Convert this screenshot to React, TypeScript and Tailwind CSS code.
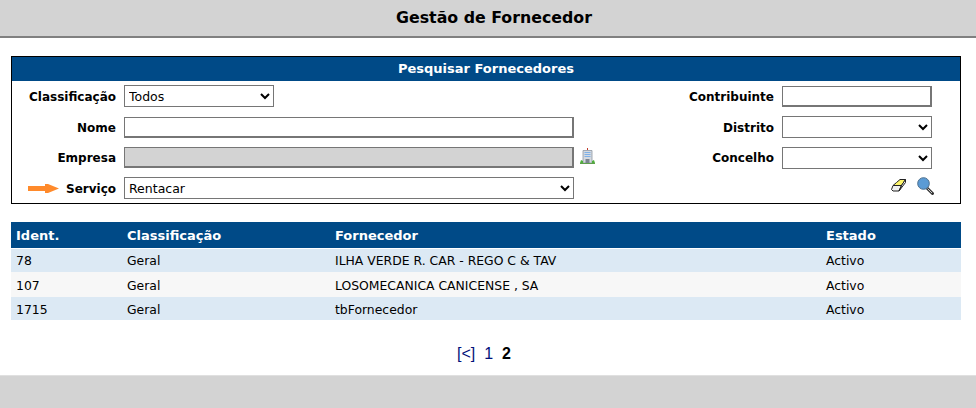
const fieldClass = "h-[22px] w-full border border-[#767676] bg-white text-[12.5px] text-black";
const inputBase = "h-[21px] w-full border border-[#767676] border-r-2 border-b-2 px-1 text-[13px]";
const labelClass = "pt-[1px] text-right font-bold";

const ArrowMark = () => (
  <svg width="31" height="11" viewBox="0 0 31 11">
    <path d="M0 3h17V1h3l11 4.500L20 10h-3V8H0z" fill="#ff8a2b" />
  </svg>
);

const BuildingIcon = () => (
  <svg width="15" height="16" viewBox="0 0 15 16">
    <path d="M7 0h1v2H7z" fill="#c0392b" />
    <path d="M3 2.500h9V15H3z" fill="#d5d9df" stroke="#8d97a3" strokeWidth="0.8" />
    <path d="M4.500 4h6v1h-6zM4.500 6h6v1h-6zM4.500 8h6v1h-6z" fill="#7db0e8" />
    <path d="M5.500 11h4v4h-4z" fill="#7b8490" />
    <path d="M0 15l1-3 2 1v2zM15 15l-1-3-2 1v2z" fill="#4fae3c" />
    <path d="M0 15h15v1H0z" fill="#5e9e4c" />
  </svg>
);

const EraserIcon = () => (
  <svg width="15" height="13" viewBox="0 0 15 13">
    <path d="M5.500 3.500L9 .5h5.500l-4 6H2z" fill="#fdf56a" stroke="#222" strokeWidth="1" strokeLinejoin="round" />
    <path d="M2 6.500h8.500l-2.500 5.500H2L.5 10.500zM10.500 6.500l4-6v3L8 12z" fill="#f0f0f0" stroke="#222" strokeWidth="1" strokeLinejoin="round" />
  </svg>
);

const SearchIcon = () => (
  <svg width="17" height="18" viewBox="0 0 17 18">
    <path d="M10 11l5.500 5.500" stroke="#333" strokeWidth="3" strokeLinecap="round" />
    <path d="M10.500 11.500l4.500 4.500" stroke="#ccc" strokeWidth="1" />
    <circle cx="6.500" cy="6.500" r="5.800" fill="#5b9bd5" stroke="#4a6d8c" strokeWidth="1" />
  </svg>
);

const rows = [
  { id: 78, cls: "Geral", name: "ILHA VERDE R. CAR - REGO C & TAV", state: "Activo", bg: "bg-[#dce9f4]", h: "h-[24px]" },
  { id: 107, cls: "Geral", name: "LOSOMECANICA CANICENSE , SA", state: "Activo", bg: "bg-[#f7f7f7]", h: "h-[25px]" },
  { id: 1715, cls: "Geral", name: "tbFornecedor", state: "Activo", bg: "bg-[#dce9f4]", h: "h-[23px]" },
];

export default function App() {
  return (
    <div className="flex h-[408px] w-[976px] flex-col overflow-hidden bg-white font-['DejaVu_Sans',sans-serif] text-[13px] text-black">
      <div className="flex h-[38px] shrink-0 items-center justify-center border-b-2 border-[#808080] bg-[#d3d3d3] pl-[12px] text-[15.8px] font-bold">
        Gestão de Fornecedor
      </div>

      <div className="mt-[18px] ml-[11px] h-[148px] w-[950px] border border-black">
        <div className="flex h-[24px] items-center justify-center bg-[#004a87] font-bold text-white">
          Pesquisar Fornecedores
        </div>
        <div className="grid grid-cols-[104px_450px_1fr_150px] grid-rows-[22px_22px_21px_22px] items-center gap-x-[8px] gap-y-[9px] pt-[4px] pr-[28px] text-[12px]">
          <label className={labelClass}>Classificação</label>
          <div className="w-[150px]">
            <select className={fieldClass} defaultValue="Todos">
              <option>Todos</option>
            </select>
          </div>
          <label className={labelClass}>Contribuinte</label>
          <input className={`${inputBase} bg-white`} />

          <label className={labelClass}>Nome</label>
          <input className={`${inputBase} bg-white`} />
          <label className={labelClass}>Distrito</label>
          <select className={fieldClass} />

          <label className={labelClass}>Empresa</label>
          <div className="relative">
            <input className={`${inputBase} bg-[#d3d3d3]`} disabled />
            <span className="absolute top-[1px] left-[456px]">
              <BuildingIcon />
            </span>
          </div>
          <label className={labelClass}>Concelho</label>
          <select className={`${fieldClass} self-start`} />

          <div className="relative flex items-center justify-end pt-[1px] font-bold">
            <span className="absolute left-[16px] flex">
              <ArrowMark />
            </span>
            Serviço
          </div>
          <select className={fieldClass} defaultValue="Rentacar">
            <option>Rentacar</option>
          </select>
          <div />
          <div className="mr-[-2px] mb-[5px] flex items-center justify-end gap-[11px]">
            <EraserIcon />
            <SearchIcon />
          </div>
        </div>
      </div>

      <table className="mt-[18px] ml-[11px] w-[950px] table-fixed border-collapse">
        <thead>
          <tr className="h-[26px] border-b border-white bg-[#004a87] text-left font-bold text-white">
            <th className="w-[111px] pt-[2px] pl-[5px]">Ident.</th>
            <th className="w-[208px] pt-[2px] pl-[5px]">Classificação</th>
            <th className="w-[491px] pt-[2px] pl-[5px]">Fornecedor</th>
            <th className="pt-[2px] pl-[5px]">Estado</th>
          </tr>
        </thead>
        <tbody className="text-[12.4px]">
          {rows.map((r) => (
            <tr key={r.id} className={`${r.bg} ${r.h}`}>
              <td className="pt-[3px] pl-[5px]">{r.id}</td>
              <td className="pt-[3px] pl-[5px]">{r.cls}</td>
              <td className="pt-[3px] pl-[5px]">{r.name}</td>
              <td className="pt-[3px] pl-[5px]">{r.state}</td>
            </tr>
          ))}
        </tbody>
      </table>

      <div className="mt-[22px] flex items-center justify-center gap-[9px] pr-[8px] font-['Liberation_Sans',sans-serif] text-[16px] text-[#00107a]">
        <a>[&lt;]</a>
        <a>1</a>
        <b className="text-black">2</b>
      </div>

      <div className="mt-auto h-[33px] border-t border-[#e0e0e0] bg-[#d3d3d3]" />
    </div>
  );
}
